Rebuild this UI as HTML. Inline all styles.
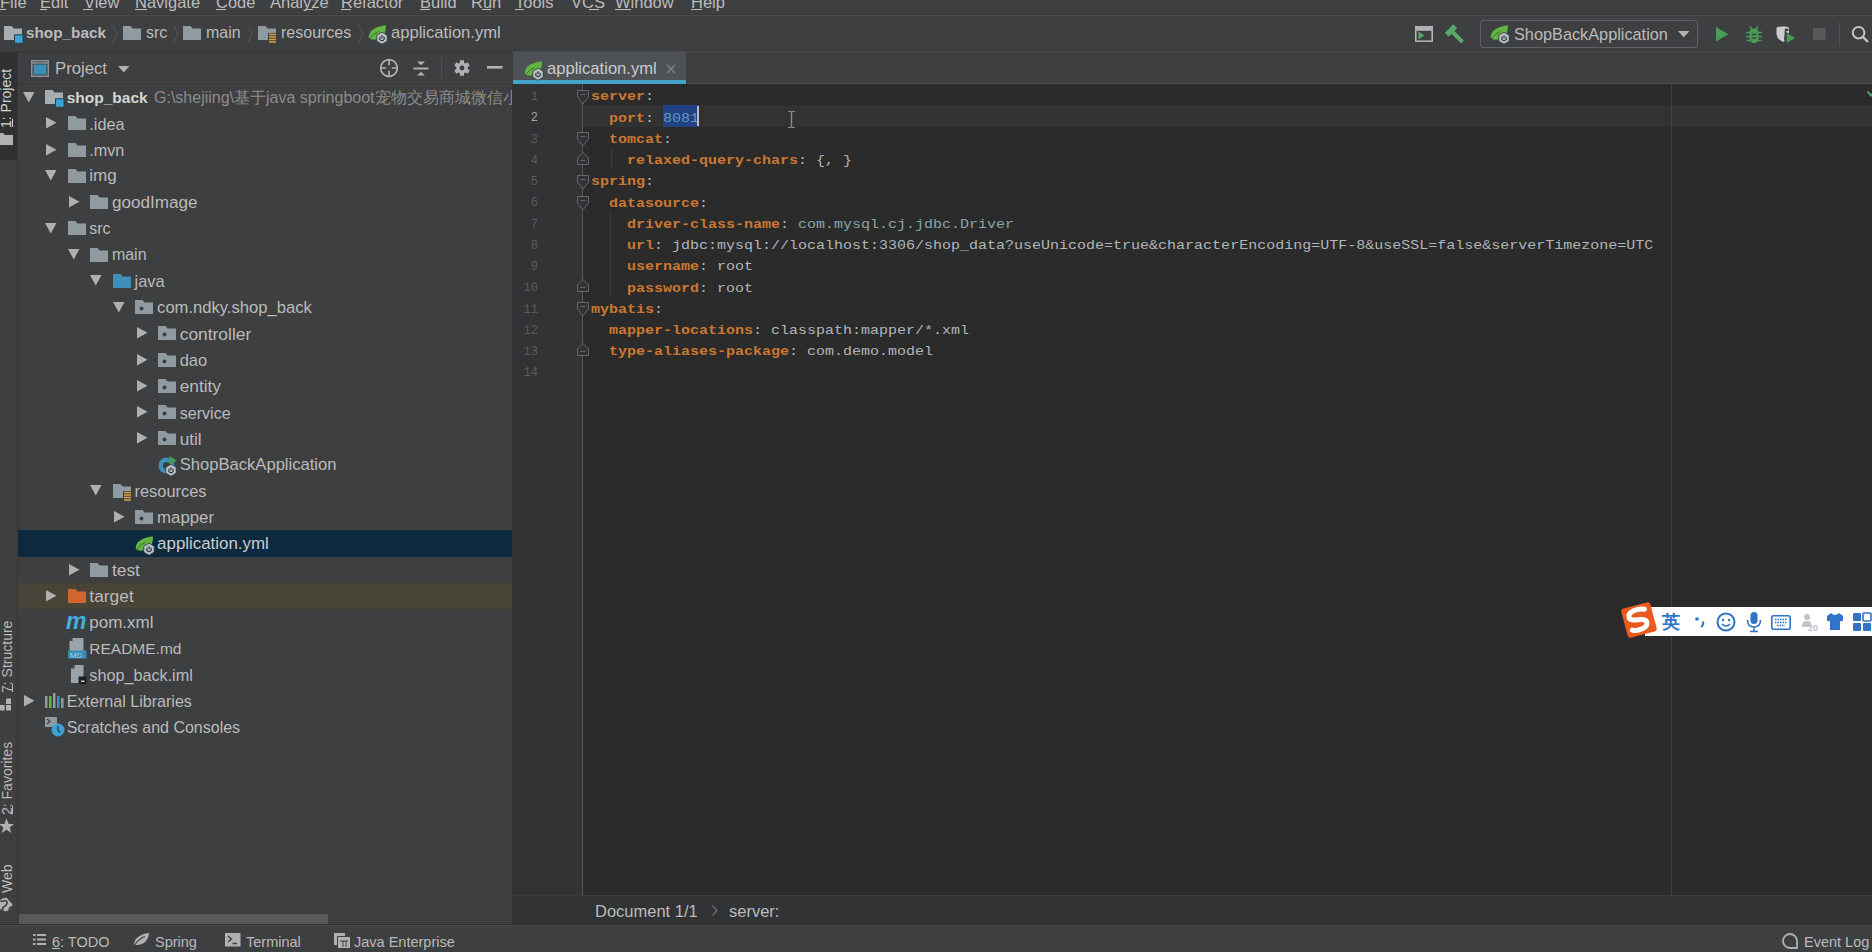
<!DOCTYPE html><html><head><meta charset="utf-8"><style>
*{margin:0;padding:0;box-sizing:border-box}
html,body{width:1872px;height:952px;overflow:hidden;background:#3E3F41;font-family:"Liberation Sans",sans-serif;color:#BBBBBB;position:relative}
.a{position:absolute}
.t{position:absolute;white-space:nowrap;font-size:16px;line-height:20px;color:#BBBBBB}
.code{position:absolute;left:591px;font-family:"Liberation Mono",monospace;font-size:15px;letter-spacing:0px;transform:scaleY(0.86);transform-origin:0 15px;line-height:21.25px;height:21.25px;white-space:pre;color:#B0B6BA}
.k{color:#CC7832;font-weight:bold}
.ln{position:absolute;left:500px;width:38px;text-align:right;font-family:"Liberation Mono",monospace;font-size:12px;line-height:21.25px;color:#606366}
svg{position:absolute;overflow:visible}
.vt{position:absolute;white-space:nowrap;font-size:14px;line-height:16px;color:#BBBBBB;transform-origin:0 0;transform:rotate(-90deg)}
.ul{position:absolute;height:1px;background:#BBBBBB}
</style></head><body>
<div class="a" style="left:0;top:0;width:1872px;height:14px;background:#3E3F41"></div>
<div class="a" style="left:0;top:14px;width:1872px;height:1px;background:#37393B"></div>
<div class="a" style="left:0;top:15px;width:1872px;height:1px;background:#4A4C4E"></div>
<div class="a" style="left:512px;top:50px;width:1360px;height:1px;background:#393B3D"></div>
<div class="a" style="left:512px;top:51px;width:1360px;height:1px;background:#46484A"></div>
<div class="a" style="left:0;top:51px;width:512px;height:1px;background:#3A3C3E"></div>
<div class="a" style="left:17px;top:52px;width:495px;height:1px;background:#343638"></div>
<div class="a" style="left:0;top:52px;width:17px;height:108px;background:#2F3133"></div>
<div class="a" style="left:17px;top:52px;width:1px;height:873px;background:#353739"></div>
<div class="a" style="left:18px;top:83px;width:494px;height:1px;background:#343638"></div>
<div class="a" style="left:512px;top:83px;width:1360px;height:1px;background:#4A4C4E"></div>
<div class="a" style="left:512px;top:84px;width:1360px;height:811px;background:#2B2B2B"></div>
<div class="a" style="left:512px;top:84px;width:70px;height:811px;background:#313335"></div>
<div class="a" style="left:582px;top:84px;width:1px;height:811px;background:#555759"></div>
<div class="a" style="left:583px;top:105.25px;width:1289px;height:21.25px;background:#323232"></div>
<div class="a" style="left:1671px;top:84px;width:1px;height:811px;background:#3F4244"></div>
<div class="a" style="left:512px;top:895px;width:1360px;height:29px;background:#323335"></div>
<div class="a" style="left:512px;top:895px;width:1360px;height:1px;background:#3A3B3D"></div>
<div class="a" style="left:0;top:924px;width:1872px;height:1px;background:#2F3032"></div>
<div class="a" style="left:0;top:925px;width:1872px;height:1px;background:#4B4C4E"></div>
<div class="a" style="left:0;top:926px;width:1872px;height:26px;background:#3E3F41"></div>
<div class="t" style="left:0px;top:-7.8px;font-size:16.5px">File</div>
<div class="ul" style="left:0px;top:9px;width:6px"></div>
<div class="t" style="left:40px;top:-7.8px;font-size:16.5px">Edit</div>
<div class="ul" style="left:40px;top:9px;width:7px"></div>
<div class="t" style="left:84px;top:-7.8px;font-size:16.5px">View</div>
<div class="ul" style="left:83px;top:9px;width:10px"></div>
<div class="t" style="left:135px;top:-7.8px;font-size:16.5px">Navigate</div>
<div class="ul" style="left:135px;top:9px;width:12px"></div>
<div class="t" style="left:216px;top:-7.8px;font-size:16.5px">Code</div>
<div class="ul" style="left:216px;top:9px;width:10px"></div>
<div class="t" style="left:270px;top:-7.8px;font-size:16.5px">Analyze</div>
<div class="ul" style="left:306px;top:9px;width:7px"></div>
<div class="t" style="left:341px;top:-7.8px;font-size:16.5px">Refactor</div>
<div class="ul" style="left:341px;top:9px;width:10px"></div>
<div class="t" style="left:420px;top:-7.8px;font-size:16.5px">Build</div>
<div class="ul" style="left:420px;top:9px;width:10px"></div>
<div class="t" style="left:471px;top:-7.8px;font-size:16.5px">Run</div>
<div class="ul" style="left:482px;top:9px;width:9px"></div>
<div class="t" style="left:515px;top:-7.8px;font-size:16.5px">Tools</div>
<div class="ul" style="left:515px;top:9px;width:9px"></div>
<div class="t" style="left:571px;top:-7.8px;font-size:16.5px">VCS</div>
<div class="ul" style="left:589px;top:9px;width:10px"></div>
<div class="t" style="left:615px;top:-7.8px;font-size:16.5px">Window</div>
<div class="ul" style="left:615px;top:9px;width:16px"></div>
<div class="t" style="left:691px;top:-7.8px;font-size:16.5px">Help</div>
<div class="ul" style="left:691px;top:9px;width:11px"></div>
<svg style="left:4px;top:25.5px" width="20" height="18" viewBox="0 0 20 18"><path d="M0 0H7.5L9.5 2.5H18V14H0Z" fill="#A7AEB3"/><rect x="10.5" y="8.8" width="8.5" height="8.5" fill="#3AA3D6" stroke="#2B3E4A" stroke-width="1"/></svg>
<div class="t" style="left:26px;top:23.2px;font-weight:bold;font-size:15.3px">shop_back</div>
<svg style="left:112px;top:24px" width="6" height="20" viewBox="0 0 6 20"><path d="M0.5 1L5 10L0.5 19" stroke="#55585A" stroke-width="1" fill="none"/></svg>
<svg style="left:123px;top:25.5px" width="18" height="14" viewBox="0 0 18 14"><path d="M0 0H7.5L9.5 2.5H18V14H0Z" fill="#8F9AA1"/></svg>
<div class="t" style="left:146px;top:23.2px">src</div>
<svg style="left:173px;top:24px" width="6" height="20" viewBox="0 0 6 20"><path d="M0.5 1L5 10L0.5 19" stroke="#55585A" stroke-width="1" fill="none"/></svg>
<svg style="left:183px;top:25.5px" width="18" height="14" viewBox="0 0 18 14"><path d="M0 0H7.5L9.5 2.5H18V14H0Z" fill="#8F9AA1"/></svg>
<div class="t" style="left:206px;top:23.2px">main</div>
<svg style="left:247px;top:24px" width="6" height="20" viewBox="0 0 6 20"><path d="M0.5 1L5 10L0.5 19" stroke="#55585A" stroke-width="1" fill="none"/></svg>
<svg style="left:258px;top:25.5px" width="20" height="18" viewBox="0 0 20 18"><path d="M0 0H7.5L9.5 2.5H18V14H0Z" fill="#8F9AA1"/><rect x="10" y="7" width="9" height="10" fill="#3E3F41"/><path d="M11 8.5H18M11 11H18M11 13.5H18M11 16H18" stroke="#D9A343" stroke-width="1.5"/></svg>
<div class="t" style="left:281px;top:23.2px">resources</div>
<svg style="left:358px;top:24px" width="6" height="20" viewBox="0 0 6 20"><path d="M0.5 1L5 10L0.5 19" stroke="#55585A" stroke-width="1" fill="none"/></svg>
<svg style="left:368px;top:25px" width="20" height="19" viewBox="0 0 20 19"><path d="M0.8 12.5C0.5 6.5 6 1.8 17.8 0.3C18.6 7.5 15 13.5 7.5 14.6C4.5 15 2 14.3 0.8 12.5Z" fill="#62B543"/><path d="M1.2 14.8C3.5 10.5 7 8 10.5 6.5" stroke="#2F3A2A" stroke-width="1" fill="none" opacity="0.6"/><path d="M14 7.2L19.2 10.2V16.2L14 19.2L8.8 16.2V10.2Z" fill="#B9C3CA" stroke="#2E3436" stroke-width="0.8"/><path d="M12.5 11.6A2.3 2.3 0 1 0 15.5 11.6" stroke="#2E3436" stroke-width="1.15" fill="none"/><path d="M14 10.3V13.4" stroke="#2E3436" stroke-width="1.15"/></svg>
<div class="t" style="left:391px;top:23.2px;font-size:16.6px">application.yml</div>
<svg style="left:1415px;top:26px" width="18" height="16" viewBox="0 0 18 16"><rect x="0.8" y="0.8" width="16.4" height="14.4" fill="none" stroke="#AFB1B3" stroke-width="1.6"/><rect x="0.8" y="0.8" width="16.4" height="4" fill="#AFB1B3"/><path d="M3.5 5.5L9.2 9.5L3.5 13.4Z" fill="#59A869"/></svg>
<svg style="left:1445px;top:24px" width="20" height="19" viewBox="0 0 20 19"><path d="M12.2 4.2L8.3 0.3L-0.2 8.8L3.7 12.7Z" fill="#59A869"/><path d="M7.4 5.1L18.9 16.6L16.1 19.4L4.6 7.9Z" fill="#59A869"/></svg>
<div class="a" style="left:1480px;top:20px;width:218px;height:28px;border:1px solid #5E6163;border-radius:3px;background:#3E3F41"></div>
<svg style="left:1490px;top:25px" width="20" height="19" viewBox="0 0 20 19"><path d="M0.8 12.5C0.5 6.5 6 1.8 17.8 0.3C18.6 7.5 15 13.5 7.5 14.6C4.5 15 2 14.3 0.8 12.5Z" fill="#62B543"/><path d="M1.2 14.8C3.5 10.5 7 8 10.5 6.5" stroke="#2F3A2A" stroke-width="1" fill="none" opacity="0.6"/><path d="M14 7.2L19.2 10.2V16.2L14 19.2L8.8 16.2V10.2Z" fill="#B9C3CA" stroke="#2E3436" stroke-width="0.8"/><path d="M12.5 11.6A2.3 2.3 0 1 0 15.5 11.6" stroke="#2E3436" stroke-width="1.15" fill="none"/><path d="M14 10.3V13.4" stroke="#2E3436" stroke-width="1.15"/></svg>
<div class="t" style="left:1514px;top:24px;font-size:16.3px">ShopBackApplication</div>
<svg style="left:1678px;top:31px" width="12" height="7" viewBox="0 0 12 7"><path d="M0 0H11.5L5.75 6.5Z" fill="#AFB1B3"/></svg>
<svg style="left:1716px;top:27px" width="13" height="15" viewBox="0 0 13 15"><path d="M0 0L12.5 7.2L0 14.5Z" fill="#499C54"/></svg>
<svg style="left:1745px;top:25px" width="18" height="19" viewBox="0 0 18 19"><path d="M5 1.5L7 4.5M13 1.5L11 4.5" stroke="#499C54" stroke-width="1.6"/><path d="M4.5 7C4.5 4.5 6.5 3.5 9 3.5S13.5 4.5 13.5 7V13C13.5 16 11.5 18 9 18S4.5 16 4.5 13Z" fill="#499C54"/><path d="M1 7.5H17M1 11.5H17M1.5 15.5H16.5" stroke="#499C54" stroke-width="1.7"/><path d="M6.8 9.5H11.2M6.8 13H11.2" stroke="#3E3F41" stroke-width="1.5"/></svg>
<svg style="left:1776px;top:26px" width="21" height="18" viewBox="0 0 21 18"><path d="M0.5 1.5Q4 0 7 0.5Q10 0 13 1.5V8.5Q13 13 7 16Q1 13 0.5 8.5Z" fill="#C9CBCD"/><path d="M9 2.5Q11.5 2.3 12.5 3V5H10.2V13.5Q9 14.5 8 15Z" fill="#3E3F41"/><path d="M10.5 6.5L20 12L10.5 17.5Z" fill="#499C54" stroke="#3E3F41" stroke-width="0.8"/></svg>
<svg style="left:1812.5px;top:28px" width="13" height="12" viewBox="0 0 13 12"><rect width="12.5" height="12" fill="#58595A"/></svg>
<div class="a" style="left:1839px;top:22px;width:1px;height:24px;background:#4E5153"></div>
<svg style="left:1850px;top:25px" width="22" height="19" viewBox="0 0 22 19"><circle cx="8.6" cy="7.7" r="5.8" stroke="#C2C4C6" stroke-width="2" fill="none"/><path d="M12.8 11.9L18 17" stroke="#C2C4C6" stroke-width="2.4"/></svg>
<div class="vt" style="left:-1.8px;top:127.5px;font-size:14px;color:#D4D4D4">1: Project</div>
<div class="a" style="left:12px;top:119px;width:1px;height:8px;background:#D4D4D4"></div>
<svg style="left:0px;top:133px" width="13" height="13" viewBox="0 0 13 13"><path d="M-4 0H3L5 2H13V12H-4Z" fill="#AFB1B3"/></svg>
<div class="vt" style="left:-1px;top:692.5px;font-size:14px">7: Structure</div>
<div class="a" style="left:12px;top:684px;width:1px;height:8px;background:#BBBBBB"></div>
<svg style="left:0px;top:697px" width="12" height="14" viewBox="0 0 12 14"><rect x="0" y="8" width="4.6" height="5.5" fill="#AFB1B3"/><rect x="6" y="1.5" width="5" height="5.5" fill="#AFB1B3"/><rect x="6" y="8" width="5" height="5.5" fill="#AFB1B3"/></svg>
<div class="vt" style="left:-1px;top:815px;font-size:14px">2: Favorites</div>
<div class="a" style="left:12px;top:806px;width:1px;height:8px;background:#BBBBBB"></div>
<svg style="left:0px;top:818px" width="14" height="17" viewBox="0 0 14 17"><path d="M6.5 0.5L8.6 6H14L9.7 9.4L11.3 15L6.5 11.7L1.7 15L3.3 9.4L-1 6H4.4Z" fill="#AFB1B3"/></svg>
<div class="vt" style="left:-1px;top:892.5px;font-size:14px">Web</div>
<svg style="left:-1px;top:897px" width="14" height="15" viewBox="0 0 14 15"><circle cx="6.5" cy="7.5" r="6.8" fill="#AFB1B3"/><path d="M1.5 4C4 5 5 3 7 4S8 8 6 9S3 12 4 14M9 1C10 3 12 4 13.5 6M10 13.5C10 11 12 10 13.5 10" stroke="#3E3F41" stroke-width="1.6" fill="none"/></svg>
<svg style="left:31px;top:60px" width="18" height="17" viewBox="0 0 18 17"><rect x="0.75" y="0.75" width="16.5" height="15.5" fill="none" stroke="#8E9397" stroke-width="1.5"/><path d="M0.75 3H17.25" stroke="#8E9397" stroke-width="1.5"/><rect x="2.5" y="4.5" width="13" height="10" fill="#3A8DB5"/></svg>
<div class="t" style="left:55px;top:59px;font-size:16.7px">Project</div>
<svg style="left:118px;top:66px" width="12" height="7" viewBox="0 0 12 7"><path d="M0 0H11.5L5.75 6.5Z" fill="#AFB1B3"/></svg>
<svg style="left:379px;top:58px" width="20" height="20" viewBox="0 0 20 20"><circle cx="10" cy="10" r="8.3" stroke="#AFB1B3" stroke-width="1.7" fill="none"/><path d="M10 2V7.3M10 12.7V18M2 10H7.3M12.7 10H18" stroke="#AFB1B3" stroke-width="1.7"/></svg>
<svg style="left:412px;top:59px" width="18" height="19" viewBox="0 0 18 19"><path d="M1.5 9.5H16.5" stroke="#AFB1B3" stroke-width="2"/><path d="M5 2.5H13L9 6.3Z" fill="#AFB1B3"/><path d="M5 16.5H13L9 12.7Z" fill="#AFB1B3"/></svg>
<div class="a" style="left:441px;top:57px;width:1px;height:22px;background:#4E5153"></div>
<svg style="left:453px;top:59px" width="18" height="18" viewBox="0 0 18 18"><g transform="translate(9 9)"><circle r="5.8" fill="#AFB1B3"/><g fill="#AFB1B3"><rect x="-2" y="-7.8" width="4" height="4"/><rect x="-2" y="-7.8" width="4" height="4" transform="rotate(60)"/><rect x="-2" y="-7.8" width="4" height="4" transform="rotate(120)"/><rect x="-2" y="-7.8" width="4" height="4" transform="rotate(180)"/><rect x="-2" y="-7.8" width="4" height="4" transform="rotate(240)"/><rect x="-2" y="-7.8" width="4" height="4" transform="rotate(300)"/></g><circle r="2.4" fill="#3E3F41"/></g></svg>
<svg style="left:487px;top:66px" width="16" height="3" viewBox="0 0 16 3"><rect width="15.5" height="2.6" fill="#AFB1B3"/></svg>
<div class="a" style="left:18px;top:530.25px;width:494px;height:26.25px;background:#0D293E"></div>
<div class="a" style="left:18px;top:582.75px;width:494px;height:26.25px;background:#494438"></div>
<svg style="left:22.5px;top:91.6px" width="12" height="11" viewBox="0 0 12 11"><path d="M0 0H11.5L5.8 10.5Z" fill="#B0B0B0"/></svg>
<svg style="left:45.0px;top:89.6px" width="20" height="18" viewBox="0 0 20 18"><path d="M0 0H7.5L9.5 2.5H18V14H0Z" fill="#A7AEB3"/><rect x="10.5" y="8.8" width="8.5" height="8.5" fill="#3AA3D6" stroke="#2B3E4A" stroke-width="1"/></svg>
<div class="t" style="left:66.7px;top:87.50px;font-size:15.5px;font-weight:bold;color:#D5D5D5;">shop_back</div>
<div class="t" style="left:154px;top:87.50px;color:#8C8C8C;width:358px;overflow:hidden">G:\shejiing\基于java springboot宠物交易商城微信小</div>
<svg style="left:46.1px;top:117.4px" width="11" height="12" viewBox="0 0 11 12"><path d="M0 0L10.5 5.8L0 11.5Z" fill="#B0B0B0"/></svg>
<svg style="left:67.6px;top:116.4px" width="18" height="14" viewBox="0 0 18 14"><path d="M0 0H7.5L9.5 2.5H18V14H0Z" fill="#8F9AA1"/></svg>
<div class="t" style="left:89.3px;top:113.75px;font-size:16.2px;">.idea</div>
<svg style="left:46.1px;top:143.6px" width="11" height="12" viewBox="0 0 11 12"><path d="M0 0L10.5 5.8L0 11.5Z" fill="#B0B0B0"/></svg>
<svg style="left:67.6px;top:142.6px" width="18" height="14" viewBox="0 0 18 14"><path d="M0 0H7.5L9.5 2.5H18V14H0Z" fill="#8F9AA1"/></svg>
<div class="t" style="left:89.3px;top:140.00px;font-size:16.2px;">.mvn</div>
<svg style="left:45.1px;top:170.4px" width="12" height="11" viewBox="0 0 12 11"><path d="M0 0H11.5L5.8 10.5Z" fill="#B0B0B0"/></svg>
<svg style="left:67.6px;top:168.9px" width="18" height="14" viewBox="0 0 18 14"><path d="M0 0H7.5L9.5 2.5H18V14H0Z" fill="#8F9AA1"/></svg>
<div class="t" style="left:89.3px;top:166.25px;font-size:17.1px;">img</div>
<svg style="left:68.7px;top:196.1px" width="11" height="12" viewBox="0 0 11 12"><path d="M0 0L10.5 5.8L0 11.5Z" fill="#B0B0B0"/></svg>
<svg style="left:90.2px;top:195.1px" width="18" height="14" viewBox="0 0 18 14"><path d="M0 0H7.5L9.5 2.5H18V14H0Z" fill="#8F9AA1"/></svg>
<div class="t" style="left:111.9px;top:192.50px;font-size:17.1px;">goodImage</div>
<svg style="left:45.1px;top:222.9px" width="12" height="11" viewBox="0 0 12 11"><path d="M0 0H11.5L5.8 10.5Z" fill="#B0B0B0"/></svg>
<svg style="left:67.6px;top:221.4px" width="18" height="14" viewBox="0 0 18 14"><path d="M0 0H7.5L9.5 2.5H18V14H0Z" fill="#8F9AA1"/></svg>
<div class="t" style="left:89.3px;top:218.75px;font-size:15.9px;">src</div>
<svg style="left:67.7px;top:249.1px" width="12" height="11" viewBox="0 0 12 11"><path d="M0 0H11.5L5.8 10.5Z" fill="#B0B0B0"/></svg>
<svg style="left:90.2px;top:247.6px" width="18" height="14" viewBox="0 0 18 14"><path d="M0 0H7.5L9.5 2.5H18V14H0Z" fill="#8F9AA1"/></svg>
<div class="t" style="left:111.9px;top:245.00px;font-size:16px;">main</div>
<svg style="left:90.3px;top:275.4px" width="12" height="11" viewBox="0 0 12 11"><path d="M0 0H11.5L5.8 10.5Z" fill="#B0B0B0"/></svg>
<svg style="left:112.8px;top:273.9px" width="18" height="14" viewBox="0 0 18 14"><path d="M0 0H7.5L9.5 2.5H18V14H0Z" fill="#3D8FB8"/></svg>
<div class="t" style="left:134.5px;top:271.25px;font-size:16.4px;">java</div>
<svg style="left:112.9px;top:301.6px" width="12" height="11" viewBox="0 0 12 11"><path d="M0 0H11.5L5.8 10.5Z" fill="#B0B0B0"/></svg>
<svg style="left:135.4px;top:300.1px" width="18" height="14" viewBox="0 0 18 14"><path d="M0 0H7.5L9.5 2.5H18V14H0Z" fill="#8F9AA1"/><circle cx="6.5" cy="8.5" r="2" fill="#3E3F41"/></svg>
<div class="t" style="left:157.1px;top:297.50px;font-size:16.6px;">com.ndky.shop_back</div>
<svg style="left:136.5px;top:327.4px" width="11" height="12" viewBox="0 0 11 12"><path d="M0 0L10.5 5.8L0 11.5Z" fill="#B0B0B0"/></svg>
<svg style="left:158.0px;top:326.4px" width="18" height="14" viewBox="0 0 18 14"><path d="M0 0H7.5L9.5 2.5H18V14H0Z" fill="#8F9AA1"/><circle cx="6.5" cy="8.5" r="2" fill="#3E3F41"/></svg>
<div class="t" style="left:179.7px;top:323.75px;font-size:17.4px;">controller</div>
<svg style="left:136.5px;top:353.6px" width="11" height="12" viewBox="0 0 11 12"><path d="M0 0L10.5 5.8L0 11.5Z" fill="#B0B0B0"/></svg>
<svg style="left:158.0px;top:352.6px" width="18" height="14" viewBox="0 0 18 14"><path d="M0 0H7.5L9.5 2.5H18V14H0Z" fill="#8F9AA1"/><circle cx="6.5" cy="8.5" r="2" fill="#3E3F41"/></svg>
<div class="t" style="left:179.7px;top:350.00px;font-size:16.4px;">dao</div>
<svg style="left:136.5px;top:379.9px" width="11" height="12" viewBox="0 0 11 12"><path d="M0 0L10.5 5.8L0 11.5Z" fill="#B0B0B0"/></svg>
<svg style="left:158.0px;top:378.9px" width="18" height="14" viewBox="0 0 18 14"><path d="M0 0H7.5L9.5 2.5H18V14H0Z" fill="#8F9AA1"/><circle cx="6.5" cy="8.5" r="2" fill="#3E3F41"/></svg>
<div class="t" style="left:179.7px;top:376.25px;font-size:17.3px;">entity</div>
<svg style="left:136.5px;top:406.1px" width="11" height="12" viewBox="0 0 11 12"><path d="M0 0L10.5 5.8L0 11.5Z" fill="#B0B0B0"/></svg>
<svg style="left:158.0px;top:405.1px" width="18" height="14" viewBox="0 0 18 14"><path d="M0 0H7.5L9.5 2.5H18V14H0Z" fill="#8F9AA1"/><circle cx="6.5" cy="8.5" r="2" fill="#3E3F41"/></svg>
<div class="t" style="left:179.7px;top:402.50px;font-size:16.1px;">service</div>
<svg style="left:136.5px;top:432.4px" width="11" height="12" viewBox="0 0 11 12"><path d="M0 0L10.5 5.8L0 11.5Z" fill="#B0B0B0"/></svg>
<svg style="left:158.0px;top:431.4px" width="18" height="14" viewBox="0 0 18 14"><path d="M0 0H7.5L9.5 2.5H18V14H0Z" fill="#8F9AA1"/><circle cx="6.5" cy="8.5" r="2" fill="#3E3F41"/></svg>
<div class="t" style="left:179.7px;top:428.75px;font-size:17.2px;">util</div>
<svg style="left:158.0px;top:454.6px" width="22" height="20" viewBox="0 0 22 20"><circle cx="8.5" cy="10.5" r="8" fill="#3D8FB8"/><circle cx="8.5" cy="10.5" r="3.6" fill="#3E3F41"/><path d="M11.5 1L19 5.5L11.5 10Z" fill="#499C54"/><path d="M13 9.2L18.2 12.2V18.2L13 21.2L7.8 18.2V12.2Z" fill="#B9C3CA" stroke="#2E3436" stroke-width="0.8"/><path d="M11.5 13.6A2.3 2.3 0 1 0 14.5 13.6" stroke="#2E3436" stroke-width="1.15" fill="none"/><path d="M13 12.3V15.4" stroke="#2E3436" stroke-width="1.15"/></svg>
<div class="t" style="left:179.7px;top:455.00px;font-size:16.6px;">ShopBackApplication</div>
<svg style="left:90.3px;top:485.4px" width="12" height="11" viewBox="0 0 12 11"><path d="M0 0H11.5L5.8 10.5Z" fill="#B0B0B0"/></svg>
<svg style="left:112.8px;top:483.9px" width="20" height="18" viewBox="0 0 20 18"><path d="M0 0H7.5L9.5 2.5H18V14H0Z" fill="#8F9AA1"/><rect x="10" y="7" width="9" height="10" fill="#3E3F41"/><path d="M11 8.5H18M11 11H18M11 13.5H18M11 16H18" stroke="#D9A343" stroke-width="1.5"/></svg>
<div class="t" style="left:134.5px;top:481.25px;font-size:16.4px;">resources</div>
<svg style="left:113.9px;top:511.1px" width="11" height="12" viewBox="0 0 11 12"><path d="M0 0L10.5 5.8L0 11.5Z" fill="#B0B0B0"/></svg>
<svg style="left:135.4px;top:510.1px" width="18" height="14" viewBox="0 0 18 14"><path d="M0 0H7.5L9.5 2.5H18V14H0Z" fill="#8F9AA1"/><circle cx="6.5" cy="8.5" r="2" fill="#3E3F41"/></svg>
<div class="t" style="left:157.1px;top:507.50px;font-size:16.8px;">mapper</div>
<svg style="left:135.4px;top:535.9px" width="20" height="19" viewBox="0 0 20 19"><path d="M0.8 12.5C0.5 6.5 6 1.8 17.8 0.3C18.6 7.5 15 13.5 7.5 14.6C4.5 15 2 14.3 0.8 12.5Z" fill="#62B543"/><path d="M1.2 14.8C3.5 10.5 7 8 10.5 6.5" stroke="#2F3A2A" stroke-width="1" fill="none" opacity="0.6"/><path d="M14 7.2L19.2 10.2V16.2L14 19.2L8.8 16.2V10.2Z" fill="#B9C3CA" stroke="#2E3436" stroke-width="0.8"/><path d="M12.5 11.6A2.3 2.3 0 1 0 15.5 11.6" stroke="#2E3436" stroke-width="1.15" fill="none"/><path d="M14 10.3V13.4" stroke="#2E3436" stroke-width="1.15"/></svg>
<div class="t" style="left:157.1px;top:533.75px;font-size:16.9px;color:#C9CCCE;">application.yml</div>
<svg style="left:68.7px;top:563.6px" width="11" height="12" viewBox="0 0 11 12"><path d="M0 0L10.5 5.8L0 11.5Z" fill="#B0B0B0"/></svg>
<svg style="left:90.2px;top:562.6px" width="18" height="14" viewBox="0 0 18 14"><path d="M0 0H7.5L9.5 2.5H18V14H0Z" fill="#8F9AA1"/></svg>
<div class="t" style="left:111.9px;top:560.00px;font-size:17.4px;">test</div>
<svg style="left:46.1px;top:589.9px" width="11" height="12" viewBox="0 0 11 12"><path d="M0 0L10.5 5.8L0 11.5Z" fill="#B0B0B0"/></svg>
<svg style="left:67.6px;top:588.9px" width="18" height="14" viewBox="0 0 18 14"><path d="M0 0H7.5L9.5 2.5H18V14H0Z" fill="#D1662D"/></svg>
<div class="t" style="left:89.3px;top:586.25px;font-size:17.4px;">target</div>
<div class="t" style="left:66.1px;top:608.6px;font-size:23px;line-height:24px;font-style:italic;font-weight:bold;color:#45ADE0">m</div>
<div class="t" style="left:89.3px;top:612.50px;font-size:17px;">pom.xml</div>
<svg style="left:67.6px;top:637.9px" width="20" height="21" viewBox="0 0 20 21"><path d="M4.5 0H15.5V13H1.5V3Z" fill="#9AA4AA"/><path d="M1.5 3H4.5V0Z" fill="#3E3F41"/><rect x="0" y="12.5" width="18.5" height="8" fill="#3A8DB5"/><text x="1.8" y="19.5" font-size="8" font-family="Liberation Sans" fill="#A8D0E6">MD</text></svg>
<div class="t" style="left:89.3px;top:638.75px;font-size:15.5px;">README.md</div>
<svg style="left:70.6px;top:664.6px" width="16" height="20" viewBox="0 0 16 20"><path d="M3.5 0H12.5V18H0V3.5Z" fill="#9AA4AA"/><path d="M0 3.5H3.5V0Z" fill="#3E3F41"/><rect x="7.5" y="11.5" width="8" height="7.5" fill="#1E1F20"/><rect x="10" y="15.5" width="3.5" height="1.5" fill="#D0D0D0"/></svg>
<div class="t" style="left:89.3px;top:665.00px;font-size:16.2px;">shop_back.iml</div>
<svg style="left:23.5px;top:694.9px" width="11" height="12" viewBox="0 0 11 12"><path d="M0 0L10.5 5.8L0 11.5Z" fill="#B0B0B0"/></svg>
<svg style="left:45.0px;top:692.9px" width="20" height="16" viewBox="0 0 20 16"><rect x="0" y="3" width="2.5" height="12" fill="#8F9AA1"/><rect x="4" y="3" width="2.5" height="12" fill="#6DB33F"/><rect x="8" y="0" width="2.5" height="15" fill="#8F9AA1"/><rect x="12" y="3" width="2.5" height="12" fill="#3D8FB8"/><rect x="16" y="5" width="2.5" height="10" fill="#8F9AA1"/></svg>
<div class="t" style="left:66.7px;top:691.25px;font-size:16.1px;">External Libraries</div>
<svg style="left:45.0px;top:717.1px" width="22" height="20" viewBox="0 0 22 20"><path d="M0 0H12V10H0Z" fill="#8F9AA1"/><path d="M2 2L5 4.5L2 7" stroke="#3E3F41" stroke-width="1.2" fill="none"/><circle cx="13" cy="13" r="6.5" fill="#3AA3D6"/><path d="M13 9V13.5L15.5 15.5" stroke="#3E3F41" stroke-width="1.4" fill="none"/></svg>
<div class="t" style="left:66.7px;top:717.50px;font-size:16.0px;">Scratches and Consoles</div>
<div class="a" style="left:19px;top:914px;width:309px;height:10px;background:#58595B"></div>
<div class="a" style="left:513px;top:52px;width:173px;height:28px;background:#4F5254"></div>
<div class="a" style="left:513px;top:80px;width:173px;height:4px;background:#45A3C8"></div>
<svg style="left:524px;top:60.5px" width="20" height="19" viewBox="0 0 20 19"><path d="M0.8 12.5C0.5 6.5 6 1.8 17.8 0.3C18.6 7.5 15 13.5 7.5 14.6C4.5 15 2 14.3 0.8 12.5Z" fill="#62B543"/><path d="M1.2 14.8C3.5 10.5 7 8 10.5 6.5" stroke="#2F3A2A" stroke-width="1" fill="none" opacity="0.6"/><path d="M14 7.2L19.2 10.2V16.2L14 19.2L8.8 16.2V10.2Z" fill="#B9C3CA" stroke="#2E3436" stroke-width="0.8"/><path d="M12.5 11.6A2.3 2.3 0 1 0 15.5 11.6" stroke="#2E3436" stroke-width="1.15" fill="none"/><path d="M14 10.3V13.4" stroke="#2E3436" stroke-width="1.15"/></svg>
<div class="t" style="left:547px;top:59px;font-size:16.6px;color:#C8CBCD">application.yml</div>
<svg style="left:665.5px;top:64px" width="10" height="10" viewBox="0 0 10 10"><path d="M1 1L9 9M9 1L1 9" stroke="#808385" stroke-width="1.3"/></svg>
<div class="a" style="left:663px;top:105.25px;width:36px;height:21.25px;background:#214283"></div>
<div class="ln" style="top:87.10px;color:#5A5C5E">1</div>
<div class="code" style="top:86.30px"><span class="k">server</span>:</div>
<div class="ln" style="top:108.35px;color:#A4A3A3">2</div>
<div class="code" style="top:107.55px">  <span class="k">port</span>: <span style="color:#6897BB">8081</span></div>
<div class="ln" style="top:129.60px;color:#5A5C5E">3</div>
<div class="code" style="top:128.80px">  <span class="k">tomcat</span>:</div>
<div class="ln" style="top:150.85px;color:#5A5C5E">4</div>
<div class="code" style="top:150.05px">    <span class="k">relaxed-query-chars</span>: {, }</div>
<div class="ln" style="top:172.10px;color:#5A5C5E">5</div>
<div class="code" style="top:171.30px"><span class="k">spring</span>:</div>
<div class="ln" style="top:193.35px;color:#5A5C5E">6</div>
<div class="code" style="top:192.55px">  <span class="k">datasource</span>:</div>
<div class="ln" style="top:214.60px;color:#5A5C5E">7</div>
<div class="code" style="top:213.80px">    <span class="k">driver-class-name</span>: <span style="color:#8BA5A7">com.mysql.cj.jdbc.Driver</span></div>
<div class="ln" style="top:235.85px;color:#5A5C5E">8</div>
<div class="code" style="top:235.05px">    <span class="k">url</span>: jdbc:mysql://localhost:3306/shop_data?useUnicode=true&amp;characterEncoding=UTF-8&amp;useSSL=false&amp;serverTimezone=UTC</div>
<div class="ln" style="top:257.10px;color:#5A5C5E">9</div>
<div class="code" style="top:256.30px">    <span class="k">username</span>: root</div>
<div class="ln" style="top:278.35px;color:#5A5C5E">10</div>
<div class="code" style="top:277.55px">    <span class="k">password</span>: root</div>
<div class="ln" style="top:299.60px;color:#5A5C5E">11</div>
<div class="code" style="top:298.80px"><span class="k">mybatis</span>:</div>
<div class="ln" style="top:320.85px;color:#5A5C5E">12</div>
<div class="code" style="top:320.05px">  <span class="k">mapper-locations</span>: classpath:mapper/*.xml</div>
<div class="ln" style="top:342.10px;color:#5A5C5E">13</div>
<div class="code" style="top:341.30px">  <span class="k">type-aliases-package</span>: com.demo.model</div>
<div class="ln" style="top:363.35px;color:#5A5C5E">14</div>
<div class="code" style="top:362.55px"></div>
<div class="a" style="left:697px;top:105.75px;width:2px;height:20.25px;background:#BBBBBB"></div>
<svg style="left:577px;top:89.8px" width="12" height="15" viewBox="0 0 12 15"><path d="M0.5 0.5H11.5V7L6 14L0.5 7Z" fill="#313335" stroke="#65686A" stroke-width="1"/><path d="M3.5 4.5H8.5" stroke="#65686A" stroke-width="1"/></svg>
<svg style="left:577px;top:132.3px" width="12" height="15" viewBox="0 0 12 15"><path d="M0.5 0.5H11.5V7L6 14L0.5 7Z" fill="#313335" stroke="#65686A" stroke-width="1"/><path d="M3.5 4.5H8.5" stroke="#65686A" stroke-width="1"/></svg>
<svg style="left:577px;top:174.8px" width="12" height="15" viewBox="0 0 12 15"><path d="M0.5 0.5H11.5V7L6 14L0.5 7Z" fill="#313335" stroke="#65686A" stroke-width="1"/><path d="M3.5 4.5H8.5" stroke="#65686A" stroke-width="1"/></svg>
<svg style="left:577px;top:196.1px" width="12" height="15" viewBox="0 0 12 15"><path d="M0.5 0.5H11.5V7L6 14L0.5 7Z" fill="#313335" stroke="#65686A" stroke-width="1"/><path d="M3.5 4.5H8.5" stroke="#65686A" stroke-width="1"/></svg>
<svg style="left:577px;top:302.3px" width="12" height="15" viewBox="0 0 12 15"><path d="M0.5 0.5H11.5V7L6 14L0.5 7Z" fill="#313335" stroke="#65686A" stroke-width="1"/><path d="M3.5 4.5H8.5" stroke="#65686A" stroke-width="1"/></svg>
<svg style="left:577px;top:151.9px" width="12" height="13" viewBox="0 0 12 13"><path d="M0.5 12.5H11.5V6L6 0.5L0.5 6Z" fill="#313335" stroke="#65686A" stroke-width="1"/><path d="M3.5 8.5H8.5" stroke="#65686A" stroke-width="1"/></svg>
<svg style="left:577px;top:279.4px" width="12" height="13" viewBox="0 0 12 13"><path d="M0.5 12.5H11.5V6L6 0.5L0.5 6Z" fill="#313335" stroke="#65686A" stroke-width="1"/><path d="M3.5 8.5H8.5" stroke="#65686A" stroke-width="1"/></svg>
<svg style="left:577px;top:343.2px" width="12" height="13" viewBox="0 0 12 13"><path d="M0.5 12.5H11.5V6L6 0.5L0.5 6Z" fill="#313335" stroke="#65686A" stroke-width="1"/><path d="M3.5 8.5H8.5" stroke="#65686A" stroke-width="1"/></svg>
<div class="a" style="left:611px;top:147.75px;width:1px;height:21.25px;background:#3B3B3B"></div>
<div class="a" style="left:610px;top:211.50px;width:1px;height:85.00px;background:#3B3B3B"></div>
<svg style="left:1867px;top:89px" width="8" height="8" viewBox="0 0 8 8"><path d="M0.5 2.5L4 6.5L9 0.5" stroke="#59A869" stroke-width="1.8" fill="none"/></svg>
<svg style="left:787px;top:111px" width="9" height="18" viewBox="0 0 9 18"><path d="M1 0.5H8M4.5 0.5V16.5M1 16.5H8" stroke="#DDDDDD" stroke-width="1.2" fill="none"/><path d="M1 0.5H8M4.5 0.5V16.5M1 16.5H8" stroke="#111" stroke-width="0.4" fill="none"/></svg>
<div class="t" style="left:595px;top:901px;font-size:16.5px;color:#BBBBBB">Document 1/1</div>
<svg style="left:712px;top:905px" width="6" height="11" viewBox="0 0 6 11"><path d="M0.5 0.5L5 5.5L0.5 10.5" stroke="#6E7173" stroke-width="1.2" fill="none"/></svg>
<div class="t" style="left:729px;top:901px;font-size:16.5px;color:#BBBBBB">server:</div>
<svg style="left:33px;top:934px" width="13" height="12" viewBox="0 0 13 12"><path d="M0 1H2.5M0 5.5H2.5M0 10H2.5M4 1H13M4 5.5H13M4 10H13" stroke="#AFB1B3" stroke-width="2"/></svg>
<div class="t" style="left:52px;top:932.5px;font-size:14.5px;line-height:18px;color:#BBBBBB">6: TODO</div>
<div class="ul" style="left:52px;top:948px;width:8px"></div>
<svg style="left:133px;top:933px" width="17" height="13" viewBox="0 0 17 13"><path d="M1 12C1 6 6 1 16 0C15.5 7 11 12 4 12Z" fill="#AFB1B3"/><path d="M1.5 12.5C4 8 8 5 12 3.5" stroke="#3E3F41" stroke-width="1.2" fill="none"/></svg>
<div class="t" style="left:155px;top:932.5px;font-size:14.5px;line-height:18px;color:#BBBBBB">Spring</div>
<svg style="left:225px;top:933px" width="16" height="14" viewBox="0 0 16 14"><rect width="15.5" height="13.5" fill="#AFB1B3"/><path d="M3 3L6.5 6L3 9M7.5 10.5H12" stroke="#3E3F41" stroke-width="1.4" fill="none"/></svg>
<div class="t" style="left:246px;top:932.5px;font-size:14.5px;line-height:18px;color:#BBBBBB">Terminal</div>
<svg style="left:334px;top:933px" width="16" height="15" viewBox="0 0 16 15"><path d="M0 0H11V3H3V12H0Z" fill="#AFB1B3"/><rect x="4" y="4" width="12" height="11" fill="#AFB1B3"/><path d="M6 8H14M9 8V14M12 8V14" stroke="#3E3F41" stroke-width="1"/></svg>
<div class="t" style="left:354px;top:932.5px;font-size:14.5px;line-height:18px;color:#BBBBBB">Java Enterprise</div>
<svg style="left:1782px;top:933px" width="17" height="17" viewBox="0 0 17 17"><path d="M8 1A7 7 0 0 1 15 8V15H8A7 7 0 0 1 1 8A7 7 0 0 1 8 1Z" stroke="#AFB1B3" stroke-width="1.8" fill="none"/></svg>
<div class="t" style="left:1804px;top:932.5px;font-size:14.5px;line-height:18px;color:#BBBBBB">Event Log</div>
<div class="a" style="left:1645px;top:607px;width:227px;height:29px;background:#FFFFFF"></div>
<svg style="left:1621px;top:602px" width="37" height="37" viewBox="0 0 37 37"><g transform="rotate(-15 18 18)"><rect x="3" y="3" width="30" height="30" rx="3" fill="#EA5A1F"/><path d="M26 9C20 6 9 7 9 13C9 19 25 16 25 22C25 28 14 29 9 26" stroke="#FFFFFF" stroke-width="5" fill="none" stroke-linecap="round"/></g></svg>
<div class="t" style="left:1662px;top:612px;font-size:18px;font-weight:bold;color:#2F74C6">英</div>
<svg style="left:1694px;top:616px" width="12" height="12" viewBox="0 0 12 12"><circle cx="3" cy="3" r="1.8" fill="#2F74C6"/><path d="M9 5.5Q10 9 7 11" stroke="#2F74C6" stroke-width="2" fill="none"/></svg>
<svg style="left:1716px;top:612px" width="20" height="20" viewBox="0 0 20 20"><circle cx="10" cy="10" r="8.5" stroke="#2F74C6" stroke-width="2" fill="none"/><circle cx="7" cy="8" r="1.2" fill="#2F74C6"/><circle cx="13" cy="8" r="1.2" fill="#2F74C6"/><path d="M6 12Q10 16 14 12" stroke="#2F74C6" stroke-width="1.6" fill="none"/></svg>
<svg style="left:1746px;top:612px" width="16" height="20" viewBox="0 0 16 20"><rect x="4.5" y="0" width="7" height="12" rx="3.5" fill="#2F74C6"/><path d="M1.5 8Q1.5 15 8 15Q14.5 15 14.5 8M8 15V19M4 19.5H12" stroke="#2F74C6" stroke-width="1.6" fill="none"/></svg>
<svg style="left:1771px;top:615px" width="20" height="15" viewBox="0 0 20 15"><rect x="0.8" y="0.8" width="18.4" height="13.4" rx="2" stroke="#2F74C6" stroke-width="1.6" fill="none"/><path d="M4 4.5H16M4 7.5H16M6 10.5H14" stroke="#2F74C6" stroke-width="1.5" stroke-dasharray="1.5 1"/></svg>
<svg style="left:1800px;top:613px" width="22" height="18" viewBox="0 0 22 18"><circle cx="7" cy="4" r="3" fill="#BFC4CC"/><path d="M2 14C2 9 4 8 7 8S11 9 11 11V14Z" fill="#BFC4CC"/><text x="8" y="17.5" font-size="9" font-weight="bold" font-family="Liberation Sans" fill="#BFC4CC">20</text></svg>
<svg style="left:1826px;top:613px" width="18" height="18" viewBox="0 0 18 18"><path d="M5 0L1 3V8H4V17H14V8H17V3L13 0Q9 4 5 0Z" fill="#2F74C6"/></svg>
<svg style="left:1853px;top:613px" width="19" height="18" viewBox="0 0 19 18"><rect x="0" y="0" width="8" height="8" rx="1" fill="#2F74C6"/><rect x="10" y="0" width="8" height="8" rx="1" fill="none" stroke="#2F74C6" stroke-width="1.6"/><rect x="0" y="10" width="8" height="8" rx="1" fill="#2F74C6"/><rect x="10" y="10" width="8" height="8" rx="1" fill="#2F74C6"/></svg>
</body></html>
